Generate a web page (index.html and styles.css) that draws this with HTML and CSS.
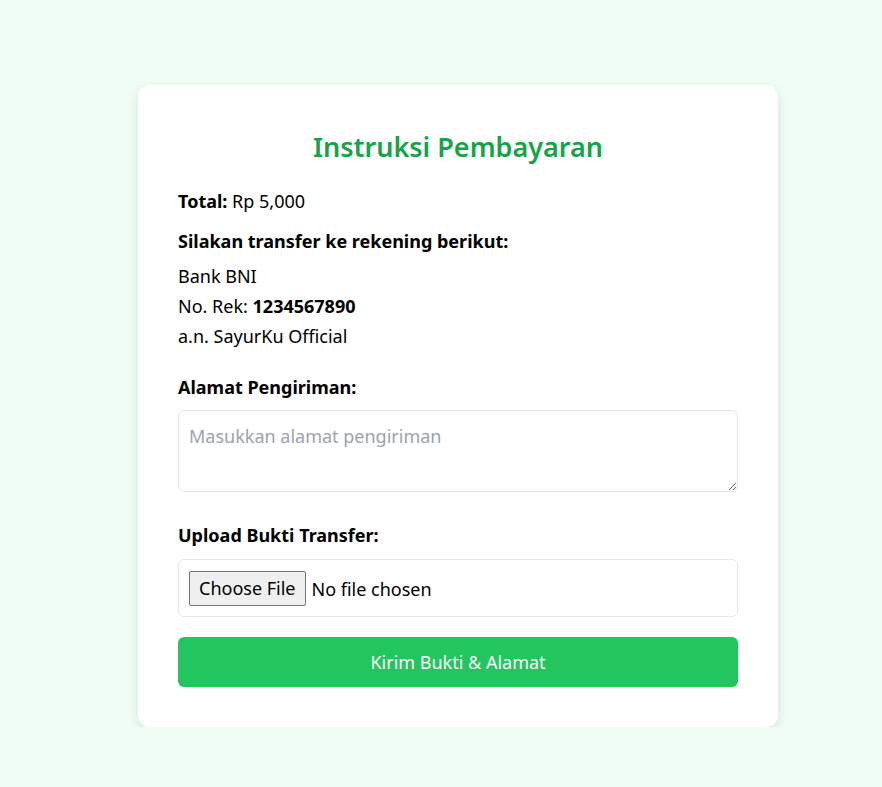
FILE: index.html
```html
<!DOCTYPE html>
<html lang="id">
<head>
<meta charset="utf-8">
<title>Instruksi Pembayaran</title>
<link rel="stylesheet" href="styles.css">
</head>
<body>
<main class="page">
  <section class="card">
    <h2 class="title">Instruksi Pembayaran</h2>
    <p class="total"><strong>Total:</strong> Rp 5,000</p>
    <p class="intro"><strong>Silakan transfer ke rekening berikut:</strong></p>
    <p class="bank">Bank BNI<br>No. Rek: <strong>1234567890</strong><br>a.n. SayurKu Official</p>
    <form class="form">
      <label class="label label-first" for="alamat">Alamat Pengiriman:</label>
      <textarea id="alamat" class="textarea" placeholder="Masukkan alamat pengiriman"></textarea>
      <label class="label" for="bukti">Upload Bukti Transfer:</label>
      <div class="filebox"><input id="bukti" class="file" type="file"></div>
      <button type="button" class="submit">Kirim Bukti &amp; Alamat</button>
    </form>
  </section>
</main>
</body>
</html>
```

FILE: styles.css
```css
* { box-sizing: border-box; }
html, body { margin: 0; padding: 0; }
body {
  background: #f0fdf4;
  font-family: "Noto Sans", "Open Sans", sans-serif;
  color: #000;
  font-size: 18px;
}
.page {
  display: flex;
  justify-content: center;
  padding-top: 85px;
  padding-left: 34px;
}
.card {
  width: 640px;
  background: #fff;
  border-radius: 12px;
  padding: 40px;
  box-shadow: 0 4px 12px rgba(0,0,0,0.1);
}
.title {
  margin: 0 0 18px;
  text-align: center;
  color: #16a34a;
  font-size: 27px;
  font-weight: 600;
  line-height: 44px;
}
.total { margin: 0; line-height: 28px; }
.intro { margin: 12px 0 6px; line-height: 28px; }
.bank { margin: 0; line-height: 30px; }
.form { display: flex; flex-direction: column; }
.label {
  display: block;
  font-weight: 700;
  line-height: 28px;
  margin: 29px 0 9px;
}
.label-first { margin-top: 22px; }
.textarea {
  width: 100%;
  height: 82px;
  border: 1px solid #e5e7eb;
  border-radius: 6px;
  padding: 13px 10px;
  font-family: inherit;
  font-size: 18px;
  resize: vertical;
}
.textarea::placeholder { color: #9ca3af; }
.filebox {
  margin-top: 1px;
  height: 58px;
  border: 1px solid #e5e7eb;
  border-radius: 6px;
  padding: 0 10px;
  display: flex;
  align-items: center;
}
.file { font-family: inherit; font-size: 18px; }
.file::file-selector-button {
  font-family: inherit;
  font-size: 18px;
  height: 35px;
  padding: 0 9px;
  margin-right: 6px;
  border: 1px solid #767676;
  border-radius: 2px;
  background: #efefef;
  color: #000;
}
.submit {
  margin-top: 20px;
  height: 50px;
  width: 100%;
  border: none;
  border-radius: 6px;
  background: #22c55e;
  color: #fff;
  font-family: inherit;
  font-size: 18px;
}
```
